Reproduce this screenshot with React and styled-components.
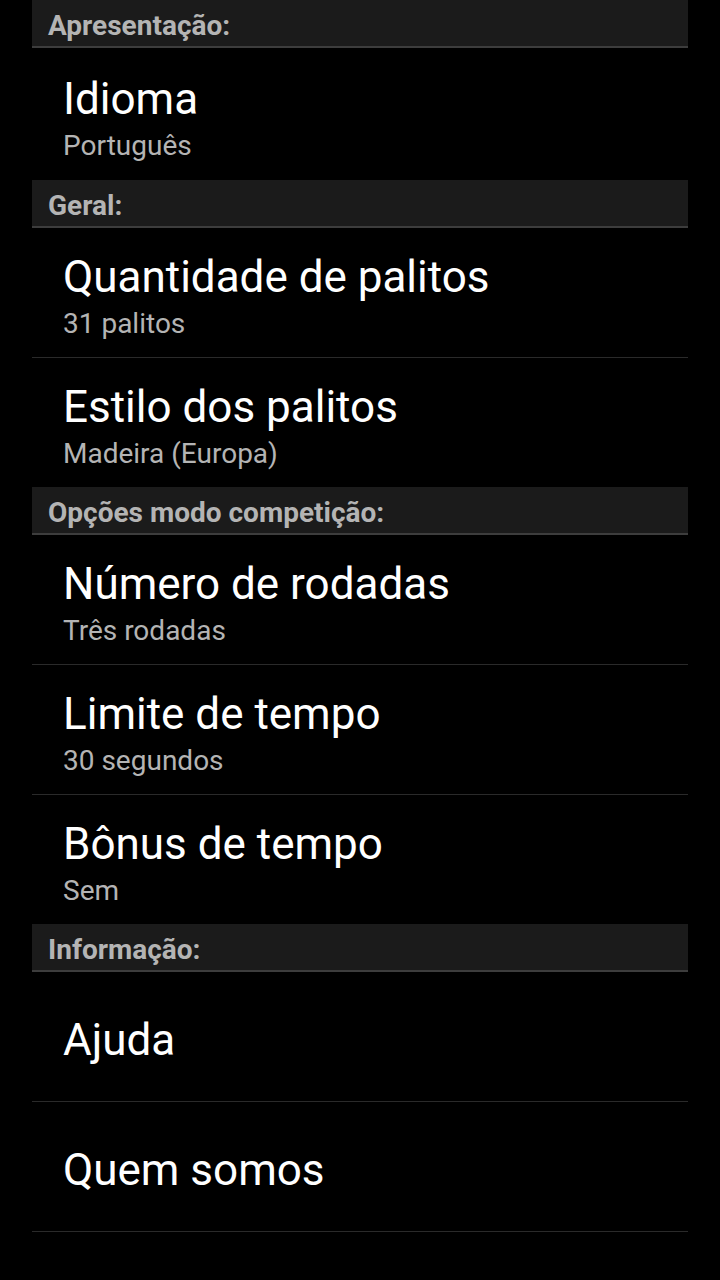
import React from "react";
import styled, { createGlobalStyle } from "styled-components";

const GlobalStyle = createGlobalStyle`
  html, body {
    margin: 0;
    padding: 0;
    background: #000;
  }
  body {
    font-family: Roboto, "Noto Sans", sans-serif;
  }
`;

const sections = [
  {
    title: "Apresentação:",
    items: [{ title: "Idioma", summary: "Português" }],
  },
  {
    title: "Geral:",
    items: [
      { title: "Quantidade de palitos", summary: "31 palitos" },
      { title: "Estilo dos palitos", summary: "Madeira (Europa)" },
    ],
  },
  {
    title: "Opções modo competição:",
    items: [
      { title: "Número de rodadas", summary: "Três rodadas" },
      { title: "Limite de tempo", summary: "30 segundos" },
      { title: "Bônus de tempo", summary: "Sem" },
    ],
  },
  {
    title: "Informação:",
    items: [{ title: "Ajuda" }, { title: "Quem somos" }],
    last: true,
  },
];

const Screen = styled.div`
  width: 720px;
  height: 1280px;
  overflow: hidden;
  background: #000;
  padding: 0 32px;
  box-sizing: border-box;
`;

const List = styled.div`
  display: flex;
  flex-direction: column;
`;

const Header = styled.div`
  height: 42px;
  display: flex;
  align-items: center;
  padding: 4px 16px 0;
  background: #1b1b1b;
  border-bottom: 2px solid #3d3d3d;
  color: #b4b4b4;
  font-size: 28px;
  font-weight: 700;
`;

const Item = styled.div`
  height: ${(p) => (p.$tall ? 125 : 122)}px;
  display: flex;
  flex-direction: column;
  justify-content: center;
  padding: 7px 31px 0;
  border-bottom: ${(p) => (p.$divider ? "1px solid #2a2a2a" : "none")};
`;

const Title = styled.div`
  color: #fff;
  font-size: 44px;
  line-height: 52px;
`;

const Summary = styled.div`
  color: #b4b4b4;
  font-size: 28px;
  line-height: 34px;
  margin-top: 4px;
`;

export default function App() {
  return (
    <>
      <GlobalStyle />
      <Screen>
        <List>
          {sections.map((section, si) => (
            <React.Fragment key={section.title}>
              <Header>{section.title}</Header>
              {section.items.map((item, i) => (
                <Item
                  key={item.title}
                  $tall={si === 0}
                  $divider={section.last || i < section.items.length - 1}
                >
                  <Title>{item.title}</Title>
                  {item.summary && <Summary>{item.summary}</Summary>}
                </Item>
              ))}
            </React.Fragment>
          ))}
        </List>
      </Screen>
    </>
  );
}
